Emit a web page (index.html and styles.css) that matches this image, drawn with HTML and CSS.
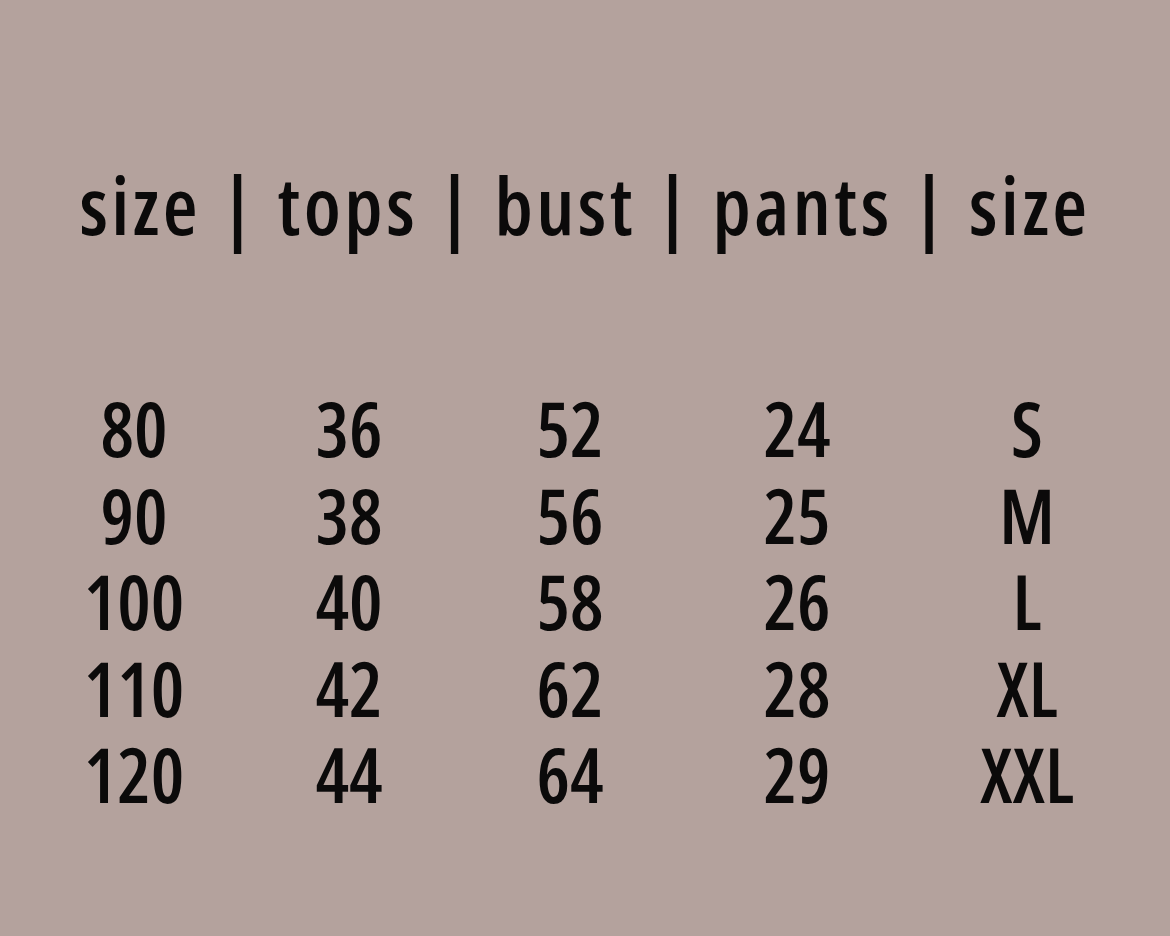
FILE: index.html
```html
<!DOCTYPE html>
<html lang="en">
<head>
<meta charset="utf-8">
<title>Size chart</title>
<link rel="stylesheet" href="styles.css">
</head>
<body>
<main class="chart">
  <h1 class="header">size | tops | bust | pants | size</h1>
  <div class="grid">
    <span>80</span><span>36</span><span>52</span><span>24</span><span>S</span>
    <span>90</span><span>38</span><span>56</span><span>25</span><span>M</span>
    <span>100</span><span>40</span><span>58</span><span>26</span><span>L</span>
    <span>110</span><span>42</span><span>62</span><span>28</span><span>XL</span>
    <span>120</span><span>44</span><span>64</span><span>29</span><span>XXL</span>
  </div>
</main>
</body>
</html>
```
FILE: styles.css
```css
html, body {
  margin: 0;
  padding: 0;
  background: #b4a29d;
}
body {
  width: 1170px;
  height: 936px;
  overflow: hidden;
  color: #0b0a0a;
  font-family: "Open Sans", "DejaVu Sans Condensed", sans-serif;
  font-stretch: 75%;
  font-weight: 600;
}
.chart {
  padding-top: 154px;
}
.header {
  margin: 0;
  font-size: 80px;
  line-height: 100px;
  font-weight: 600;
  letter-spacing: 3.5px;
  word-spacing: 2px;
  text-align: center;
  white-space: nowrap;
}
.grid {
  margin-top: 131px;
  padding-left: 24px;
  display: grid;
  grid-template-columns: 220px 210px 232px 222px 238px;
  font-size: 75px;
  line-height: 86.5px;
  text-align: center;
}
```
